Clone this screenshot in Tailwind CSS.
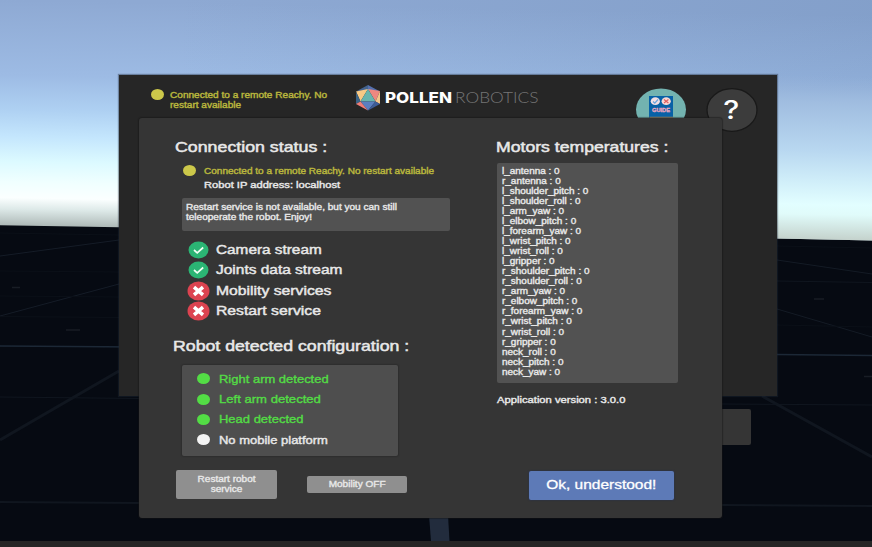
<!DOCTYPE html>
<html lang="en">
<head>
<meta charset="utf-8">
<title>Reachy teleoperation</title>
<script src="https://cdn.jsdelivr.net/npm/@tailwindcss/browser@4"></script>
</head>
<body class="relative h-[547px] w-[872px] overflow-hidden bg-[#060a12] font-['Liberation_Sans',Arial,sans-serif] text-[#e8e8e8]">

<!-- Sky and floor grid -->
<svg class="absolute inset-0" width="872" height="547" viewBox="0 0 872 547">
  <defs>
    <linearGradient id="sky" gradientUnits="userSpaceOnUse" x1="0" y1="0" x2="-4" y2="227">
      <stop offset="0" stop-color="#8ea9d3"/>
      <stop offset=".33" stop-color="#9dbbe4"/>
      <stop offset=".48" stop-color="#aed0f2"/>
      <stop offset=".6" stop-color="#c4e6fd"/>
      <stop offset=".71" stop-color="#dcfaff"/>
      <stop offset=".8" stop-color="#f0ffff"/>
      <stop offset=".87" stop-color="#fbffff"/>
      <stop offset=".92" stop-color="#dde9e8"/>
      <stop offset="1" stop-color="#a9b4b2"/>
    </linearGradient>
    <linearGradient id="shade" x1="0" y1="0" x2="1" y2="0">
      <stop offset=".2" stop-color="#587aa8" stop-opacity="0"/>
      <stop offset="1" stop-color="#587aa8" stop-opacity=".2"/>
    </linearGradient>
    <linearGradient id="haze" gradientUnits="userSpaceOnUse" x1="777" y1="75" x2="774" y2="240">
      <stop offset="0" stop-color="#98b4d9" stop-opacity="0"/>
      <stop offset=".16" stop-color="#a0bde0"/>
      <stop offset=".45" stop-color="#b8d7f0"/>
      <stop offset=".64" stop-color="#d0eef9"/>
      <stop offset=".78" stop-color="#e2feff"/>
      <stop offset=".84" stop-color="#e0fbfa"/>
      <stop offset="1" stop-color="#c3d0ca"/>
    </linearGradient>
  </defs>
  <path d="M0 0H872V240.500L777 238.500L119 227.300L0 225.300Z" fill="url(#sky)"/>
  <path d="M0 0H872V240.500L777 238.500L119 227.300L0 225.300Z" fill="url(#shade)"/>
  <path d="M777 75H872V240.500L777 238.500Z" fill="url(#haze)"/>
  <g fill="none" stroke="#10161f">
    <path d="M0 256L119 240M0 316L119 284" stroke="#151c27"/>
    <path d="M0 346L139 347M777 354.500L872 355.500" stroke="#1c2836" stroke-width="1.300"/>
    <path d="M0 440L119 371M762 396L872 457" stroke-width="3"/>
    <path d="M0 397L139 398.500M722 404L872 405M777 281L872 282.500"/>
    <path d="M0 502L139 503M722 505L872 506" stroke-width="2"/>
    <path d="M777 260L872 274M777 309L872 337" stroke="#141b25"/>
    <path d="M0 233L119 235M0 271L119 272M0 296L119 297M0 316.500L119 317.500M777 246L872 248M777 325L872 327" stroke="#0b1018"/>
    <path d="M12 287.500H20M66 330H80M814 299H824M864 376.500H872" stroke="#181d25" stroke-width="1.500"/>
  </g>
  <path d="M429 515H448L449.500 541H431Z" fill="#222c3d"/>
</svg>

<!-- Window behind the dialog -->
<header class="absolute left-[119px] top-[75px] h-[321px] w-[658px] bg-[#262626] shadow-[0_0_1px_1px_rgba(30,40,55,0.4)]">
  <div class="flex h-[43px] items-start pl-8">
    <span class="mt-[14px] h-[11px] w-[13px] rounded-[50%] bg-[#ccc84a]"></span>
    <p class="ml-1.5 mt-[14.500px] w-[150px] origin-left scale-x-[1.185] whitespace-nowrap text-[8.500px] leading-[10px] text-[#b9b63d] [-webkit-text-stroke:0.400px_#b9b63d]">Connected to a remote Reachy. No<br>restart available</p>
    <svg class="ml-[36px] mt-[9px]" width="186" height="28" viewBox="0 0 186 28">
      <path d="M12 1L24 7.500L12 6Z" fill="#5470ad"/>
      <path d="M12 1L0 7.500L12 6Z" fill="#43638f"/>
      <path d="M0 7.500L12 5L4.500 17.500Z" fill="#f8c985"/>
      <path d="M12 5L24 7L19.500 17.500Z" fill="#ee8880"/>
      <path d="M24 7V20L19.500 17.500Z" fill="#f3c58a"/>
      <path d="M0 7.500V20L4.500 17.500Z" fill="#3a6386"/>
      <path d="M12 5L19.500 17.500H4.500Z" fill="#68b5ae"/>
      <path d="M4.500 17.500H19.500L12 26.500Z" fill="#5b7fc0"/>
      <path d="M0 20L4.500 17.500L12 26.500Z" fill="#ee7e78"/>
      <path d="M24 20L19.500 17.500L12 26.500Z" fill="#3e5c97"/>
      <text x="29" y="19.200" textLength="67" lengthAdjust="spacingAndGlyphs" font-family="Inter, sans-serif" font-size="15" font-weight="800" fill="#fff">POLLEN</text>
      <text x="99" y="19.200" textLength="83.500" lengthAdjust="spacingAndGlyphs" font-family="Lato, sans-serif" font-size="15.500" font-weight="300" fill="#757575">ROBOTICS</text>
    </svg>
    <svg class="ml-[93px] mt-[13px] shrink-0" width="52" height="43" viewBox="0 0 52 43">
      <ellipse cx="26" cy="21.500" rx="25" ry="21" fill="#73b3b0"/>
      <path d="M14 8H38V36H14Z" fill="#0861a6"/>
      <ellipse cx="20.300" cy="13.200" rx="4.600" ry="3.900" fill="#f3dfe4"/>
      <ellipse cx="31.200" cy="13.200" rx="4.600" ry="3.900" fill="#f8d9d6"/>
      <path d="M18 13.500L19.800 15.200L23 11.500" fill="none" stroke="#6aa5dd" stroke-width="1.200"/>
      <path d="M29 11.500L33.400 15M33.400 11.500L29 15" fill="none" stroke="#e06060" stroke-width="1.200"/>
      <text x="17" y="24" textLength="18" lengthAdjust="spacingAndGlyphs" font-family="Liberation Sans, sans-serif" font-size="5.500" font-weight="700" fill="#f0a8c0" stroke="#f0a8c0" stroke-width=".3">GUIDE</text>
      <path d="M14.500 29.300H38" stroke="#c0a070"/>
    </svg>
    <svg class="ml-[17.500px] mt-[12px] shrink-0" width="54" height="46" viewBox="0 0 54 46">
      <ellipse cx="27" cy="23" rx="25" ry="21.300" fill="#3c3c3c" stroke="#191919" stroke-width="1.300"/>
      <text x="18.300" y="32.300" textLength="16" lengthAdjust="spacingAndGlyphs" font-family="Inter, sans-serif" font-size="25" font-weight="500" fill="#fff">?</text>
    </svg>
  </div>
</header>
<div class="absolute left-[660px] top-[409px] h-9 w-[91px] rounded-[2px] bg-[#353535]"></div>

<!-- Status dialog -->
<main class="absolute left-[139px] top-[118px] flex h-[400px] w-[583px] rounded-[3px] bg-[#353535] shadow-[0_0_1px_1px_rgba(20,20,20,0.45)]">
  <section class="w-[357px] pl-[34px] pt-[17.500px]">
    <h2 class="ml-[2px] h-[22px] w-fit origin-left scale-x-[1.185] whitespace-nowrap text-[15px] leading-[22px] [-webkit-text-stroke:0.500px_#e8e8e8]">Connection status :</h2>
    <div class="ml-[9.500px] mt-[6px] flex h-[14px] items-center">
      <span class="h-[11px] w-[13px] rounded-[50%] bg-[#ccc84a]"></span>
      <p class="ml-2 w-fit origin-left scale-x-[1.18] whitespace-nowrap text-[8.500px] leading-[12px] text-[#b9b63d] [-webkit-text-stroke:0.400px_#b9b63d]">Connected to a remote Reachy. No restart available</p>
    </div>
    <p class="ml-[30.500px] mt-[0.500px] w-fit origin-left scale-x-[1.185] whitespace-nowrap text-[9.420px] leading-[14px] [-webkit-text-stroke:0.400px_#e8e8e8]">Robot IP address: localhost</p>
    <div class="ml-[9px] mt-[6px] h-[33px] w-[268px] rounded-[2px] bg-[#525252] pl-[3.500px] pt-[4px]">
      <p class="w-fit origin-left scale-x-[1.19] whitespace-nowrap text-[8.450px] leading-[10px] [-webkit-text-stroke:0.350px_#e8e8e8]">Restart service is not available, but you can still<br>teleoperate the robot. Enjoy!</p>
    </div>
    <ul class="ml-[14px] mt-[8.500px] text-[13px] leading-[20.500px] [-webkit-text-stroke:0.450px_#e8e8e8]">
      <li class="flex h-[20.500px] items-center"><svg width="23" height="20" viewBox="0 0 23 20"><ellipse cx="11.500" cy="10" rx="10" ry="8.500" fill="#2bb574"/><path d="M7 10L10.200 12.800L16.200 7.500" fill="none" stroke="#f0fff4" stroke-width="1.700"/></svg><span class="ml-[6px] origin-left scale-x-[1.18] whitespace-nowrap">Camera stream</span></li>
      <li class="flex h-[20.500px] items-center"><svg width="23" height="20" viewBox="0 0 23 20"><ellipse cx="11.500" cy="10" rx="10" ry="8.500" fill="#2bb574"/><path d="M7 10L10.200 12.800L16.200 7.500" fill="none" stroke="#f0fff4" stroke-width="1.700"/></svg><span class="ml-[6px] origin-left scale-x-[1.19] whitespace-nowrap">Joints data stream</span></li>
      <li class="flex h-[20.500px] items-center"><svg width="23" height="20" viewBox="0 0 23 20"><ellipse cx="11.500" cy="10" rx="11" ry="9.500" fill="#dc4350"/><path d="M7 6.200L16 13.800M16 6.200L7 13.800" fill="none" stroke="#fff" stroke-width="3.500"/></svg><span class="ml-[6px] origin-left scale-x-[1.21] whitespace-nowrap">Mobility services</span></li>
      <li class="flex h-[20.500px] items-center"><svg width="23" height="20" viewBox="0 0 23 20"><ellipse cx="11.500" cy="10" rx="11" ry="9.500" fill="#dc4350"/><path d="M7 6.200L16 13.800M16 6.200L7 13.800" fill="none" stroke="#fff" stroke-width="3.500"/></svg><span class="ml-[6px] origin-left scale-x-[1.21] whitespace-nowrap">Restart service</span></li>
    </ul>
    <h2 class="mt-[13px] h-[22px] w-fit origin-left scale-x-[1.18] whitespace-nowrap text-[15px] leading-[22px] [-webkit-text-stroke:0.500px_#e8e8e8]">Robot detected configuration :</h2>
    <ul class="ml-[8.500px] mt-[8.500px] h-[91px] w-[216.500px] rounded-[2px] bg-[#4e4e4e] pl-[15px] pt-[3.500px] text-[11px] leading-[20.400px] text-[#53dc45] shadow-[0_0_1px_1px_rgba(30,30,30,0.3)]">
      <li class="flex h-[20.400px] items-center"><span class="h-[11px] w-[13px] rounded-[50%] bg-[#53dc45]"></span><span class="ml-[9px] origin-left scale-x-[1.18] whitespace-nowrap [-webkit-text-stroke:0.350px_#53dc45]">Right arm detected</span></li>
      <li class="flex h-[20.400px] items-center"><span class="h-[11px] w-[13px] rounded-[50%] bg-[#53dc45]"></span><span class="ml-[9px] origin-left scale-x-[1.19] whitespace-nowrap [-webkit-text-stroke:0.350px_#53dc45]">Left arm detected</span></li>
      <li class="flex h-[20.400px] items-center"><span class="h-[11px] w-[13px] rounded-[50%] bg-[#53dc45]"></span><span class="ml-[9px] origin-left scale-x-[1.18] whitespace-nowrap [-webkit-text-stroke:0.350px_#53dc45]">Head detected</span></li>
      <li class="flex h-[20.400px] items-center text-[#e8e8e8]"><span class="h-[11px] w-[13px] rounded-[50%] bg-[#f4f4f4]"></span><span class="ml-[9px] origin-left scale-x-[1.18] whitespace-nowrap [-webkit-text-stroke:0.400px_#e8e8e8]">No mobile platform</span></li>
    </ul>
    <div class="ml-[3px] mt-[13.500px] flex h-[29px] items-center gap-[30px] text-[8.500px] leading-[10px] [-webkit-text-stroke:0.350px_#e8e8e8]">
      <button class="flex h-[29px] w-[100.500px] items-center justify-center rounded-[2px] bg-[#8f8f8f]"><span class="scale-x-[1.18] whitespace-nowrap">Restart robot<br>service</span></button>
      <button class="flex h-[17px] w-[100.500px] items-center justify-center rounded-[2px] bg-[#8f8f8f]"><span class="scale-x-[1.18] whitespace-nowrap">Mobility OFF</span></button>
    </div>
  </section>
  <section class="flex w-[226px] flex-col pt-[18px]">
    <h2 class="h-[22px] w-fit origin-left scale-x-[1.175] whitespace-nowrap text-[15px] leading-[22px] [-webkit-text-stroke:0.500px_#e8e8e8]">Motors temperatures :</h2>
    <div class="ml-[0.500px] mt-[5px] h-[220px] w-[181px] rounded-[2px] bg-[#525252] pl-[5px] pt-[3px]">
      <p class="w-fit origin-left scale-x-[1.18] whitespace-nowrap text-[8.450px] leading-[10.030px] [-webkit-text-stroke:0.350px_#e8e8e8]">l_antenna : 0<br>r_antenna : 0<br>l_shoulder_pitch : 0<br>l_shoulder_roll : 0<br>l_arm_yaw : 0<br>l_elbow_pitch : 0<br>l_forearm_yaw : 0<br>l_wrist_pitch : 0<br>l_wrist_roll : 0<br>l_gripper : 0<br>r_shoulder_pitch : 0<br>r_shoulder_roll : 0<br>r_arm_yaw : 0<br>r_elbow_pitch : 0<br>r_forearm_yaw : 0<br>r_wrist_pitch : 0<br>r_wrist_roll : 0<br>r_gripper : 0<br>neck_roll : 0<br>neck_pitch : 0<br>neck_yaw : 0</p>
    </div>
    <p class="ml-[1px] mt-[10px] w-fit origin-left scale-x-[1.18] whitespace-nowrap text-[9.500px] leading-[14px] [-webkit-text-stroke:0.400px_#e8e8e8]">Application version : 3.0.0</p>
    <button class="ml-[33px] mt-[63.500px] flex h-[29px] w-[145px] items-center justify-center rounded-[2px] bg-[#5d7ab7] text-[13px] text-white shadow-[0_0_1px_1px_rgba(40,50,80,0.4)]"><span class="scale-x-[1.19] whitespace-nowrap [-webkit-text-stroke:0.300px_#fff]">Ok, understood!</span></button>
  </section>
</main>

<div class="absolute bottom-0 left-0 h-[6px] w-full bg-[#262626]"></div>
</body>
</html>
